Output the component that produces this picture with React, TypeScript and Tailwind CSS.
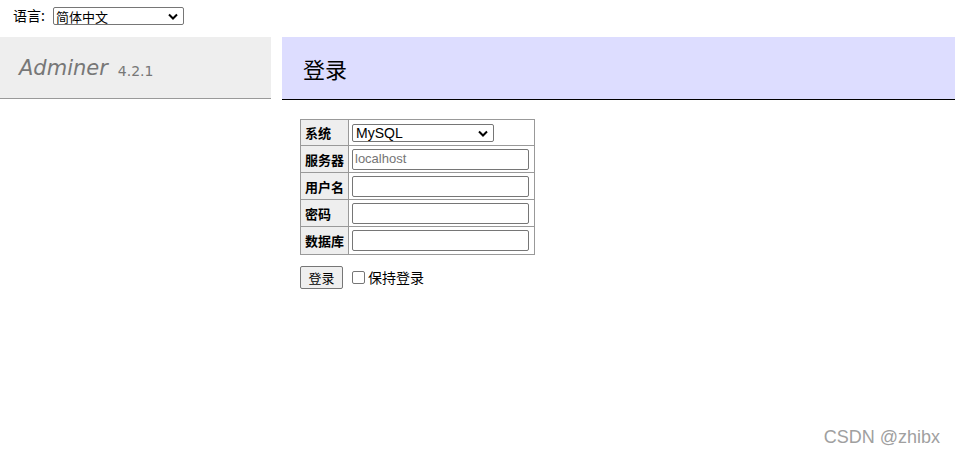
export default function App() {
  const rows = ["服务器", "用户名", "密码", "数据库"];
  return (
    <div className="relative h-[456px] w-[955px] overflow-hidden bg-white font-['DejaVu_Sans','Noto_Sans_CJK_SC',sans-serif] text-[13px] text-black">
      {/* Language */}
      <div className="flex h-[37px] items-start px-[13px] pt-[7px]">
        <span className="font-['Noto_Sans_CJK_SC',sans-serif] text-[14px] leading-[17px]">语言:</span>
        <div className="relative ml-[8px] flex h-[18px] w-[131px] items-center rounded-[2px] border border-[#767676] bg-white px-[2px] font-['Noto_Sans_CJK_SC',sans-serif] text-[13px] leading-none">
          简体中文
          <svg className="absolute right-[5px] top-[5px]" width="10" height="7" viewBox="0 0 10 7">
            <path d="M1 1.5 L5 5.5 L9 1.5" fill="none" stroke="#000" strokeWidth="2" />
          </svg>
        </div>
      </div>

      {/* Header row */}
      <div className="flex items-start gap-[11px]">
        <div className="flex h-[62px] w-[271px] items-center border-b border-[#999] bg-[#eee] pl-[19px] pt-[3px]">
          <span className="text-[21px] italic text-[#777]">Adminer</span>
          <span className="ml-[10px] mt-[5px] text-[14px] text-[#777]">4.2.1</span>
        </div>
        <div className="flex h-[63px] flex-1 items-center border-b border-black bg-[#ddf] pl-[21px]">
          <span className="font-['Noto_Sans_CJK_SC',sans-serif] text-[22px]">登录</span>
        </div>
      </div>

      {/* Form */}
      <div className="ml-[300px] mt-[19px] font-['Noto_Sans_CJK_SC',sans-serif]">
        <table className="border-collapse border border-[#999]">
          <tbody>
            <tr className="h-[26px]">
              <th className="w-[48px] border border-[#999] bg-[#eee] px-[4px] text-left text-[13px] font-bold leading-none">系统</th>
              <td className="w-[186px] border border-[#999] px-[3px]">
                <div className="relative flex h-[18px] w-[142px] items-center rounded-[2px] border border-[#767676] px-[3px] font-['Liberation_Sans',sans-serif] text-[14px] leading-none">
                  MySQL
                  <svg className="absolute right-[5px] top-[5px]" width="10" height="7" viewBox="0 0 10 7">
                    <path d="M1 1.5 L5 5.5 L9 1.5" fill="none" stroke="#000" strokeWidth="2" />
                  </svg>
                </div>
              </td>
            </tr>
            {rows.map((r, i) => (
              <tr key={r} className={i === 3 ? "h-[28px]" : "h-[27px]"}>
                <th className="border border-[#999] bg-[#eee] px-[4px] text-left text-[13px] font-bold leading-none">{r}</th>
                <td className="border border-[#999] px-[3px]">
                  <div className="flex h-[21px] w-[177px] items-center rounded-[2px] border border-[#767676] px-[2px] font-['Liberation_Sans',sans-serif] text-[13px] text-[#757575]">
                    {i === 0 ? "localhost" : ""}
                  </div>
                </td>
              </tr>
            ))}
          </tbody>
        </table>

        <div className="mt-[11px] flex items-center">
          <button className="flex h-[23px] w-[43px] items-center justify-center rounded-[2px] border border-[#767676] bg-[#efefef] text-[13px]">
            登录
          </button>
          <span className="ml-[9px] h-[13px] w-[13px] rounded-[2px] border border-[#767676] bg-white" />
          <span className="ml-[3px] text-[14px]">保持登录</span>
        </div>
      </div>

      {/* Watermark */}
      <div className="absolute bottom-[5px] right-[15px] font-['Liberation_Sans',sans-serif] text-[18px] text-[#a0a0a0]">
        CSDN @zhibx
      </div>
    </div>
  );
}
